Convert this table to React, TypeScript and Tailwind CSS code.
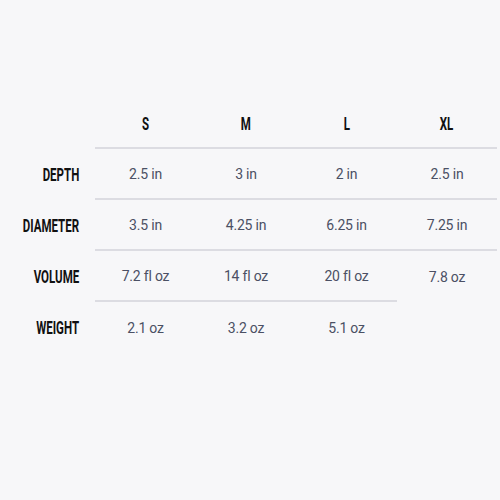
const sizes = ["S", "M", "L", "XL"];

const rows: { label: string; values: (string | null)[] }[] = [
  { label: "DEPTH", values: ["2.5 in", "3 in", "2 in", "2.5 in"] },
  { label: "DIAMETER", values: ["3.5 in", "4.25 in", "6.25 in", "7.25 in"] },
  { label: "VOLUME", values: ["7.2 fl oz", "14 fl oz", "20 fl oz", "7.8 oz"] },
  { label: "WEIGHT", values: ["2.1 oz", "3.2 oz", "5.1 oz", null] },
];

// condensed bold look: Roboto squeezed horizontally
function Label({ text, origin }: { text: string; origin: string }) {
  return (
    <span
      className={`inline-block scale-x-[0.64] font-['Roboto',sans-serif] text-[18px] font-bold leading-none text-[#111] ${origin}`}
    >
      {text}
    </span>
  );
}

export default function App() {
  return (
    <div className="h-[500px] w-[500px] bg-[#f7f7f9] pt-[100px]">
      <div className="grid grid-cols-[95px_101px_100px_101px_100px]">
        <div />
        {sizes.map((s) => (
          <div
            key={s}
            className="flex h-[49px] items-center justify-center border-b-2 border-[#dcdce2]"
          >
            <Label text={s} origin="origin-center" />
          </div>
        ))}

        {rows.map((row, i) => (
          <Row key={row.label} row={row} last={i === rows.length - 1} />
        ))}
      </div>
    </div>
  );
}

function Row({
  row,
  last,
}: {
  row: { label: string; values: (string | null)[] };
  last: boolean;
}) {
  return (
    <>
      <div className="flex h-[51px] items-center justify-end pr-[16px]">
        <Label text={row.label} origin="origin-right" />
      </div>
      {row.values.map((v, j) => (
        <div
          key={j}
          className={`flex h-[51px] items-center justify-center pt-[2px] font-['Roboto',sans-serif] text-[14px] tracking-[-0.2px] text-[#4b5064] ${
            !last && v !== null && !(row.label === "VOLUME" && j === 3)
              ? "border-b-2 border-[#dcdce2]"
              : ""
          }`}
        >
          {v}
        </div>
      ))}
    </>
  );
}
